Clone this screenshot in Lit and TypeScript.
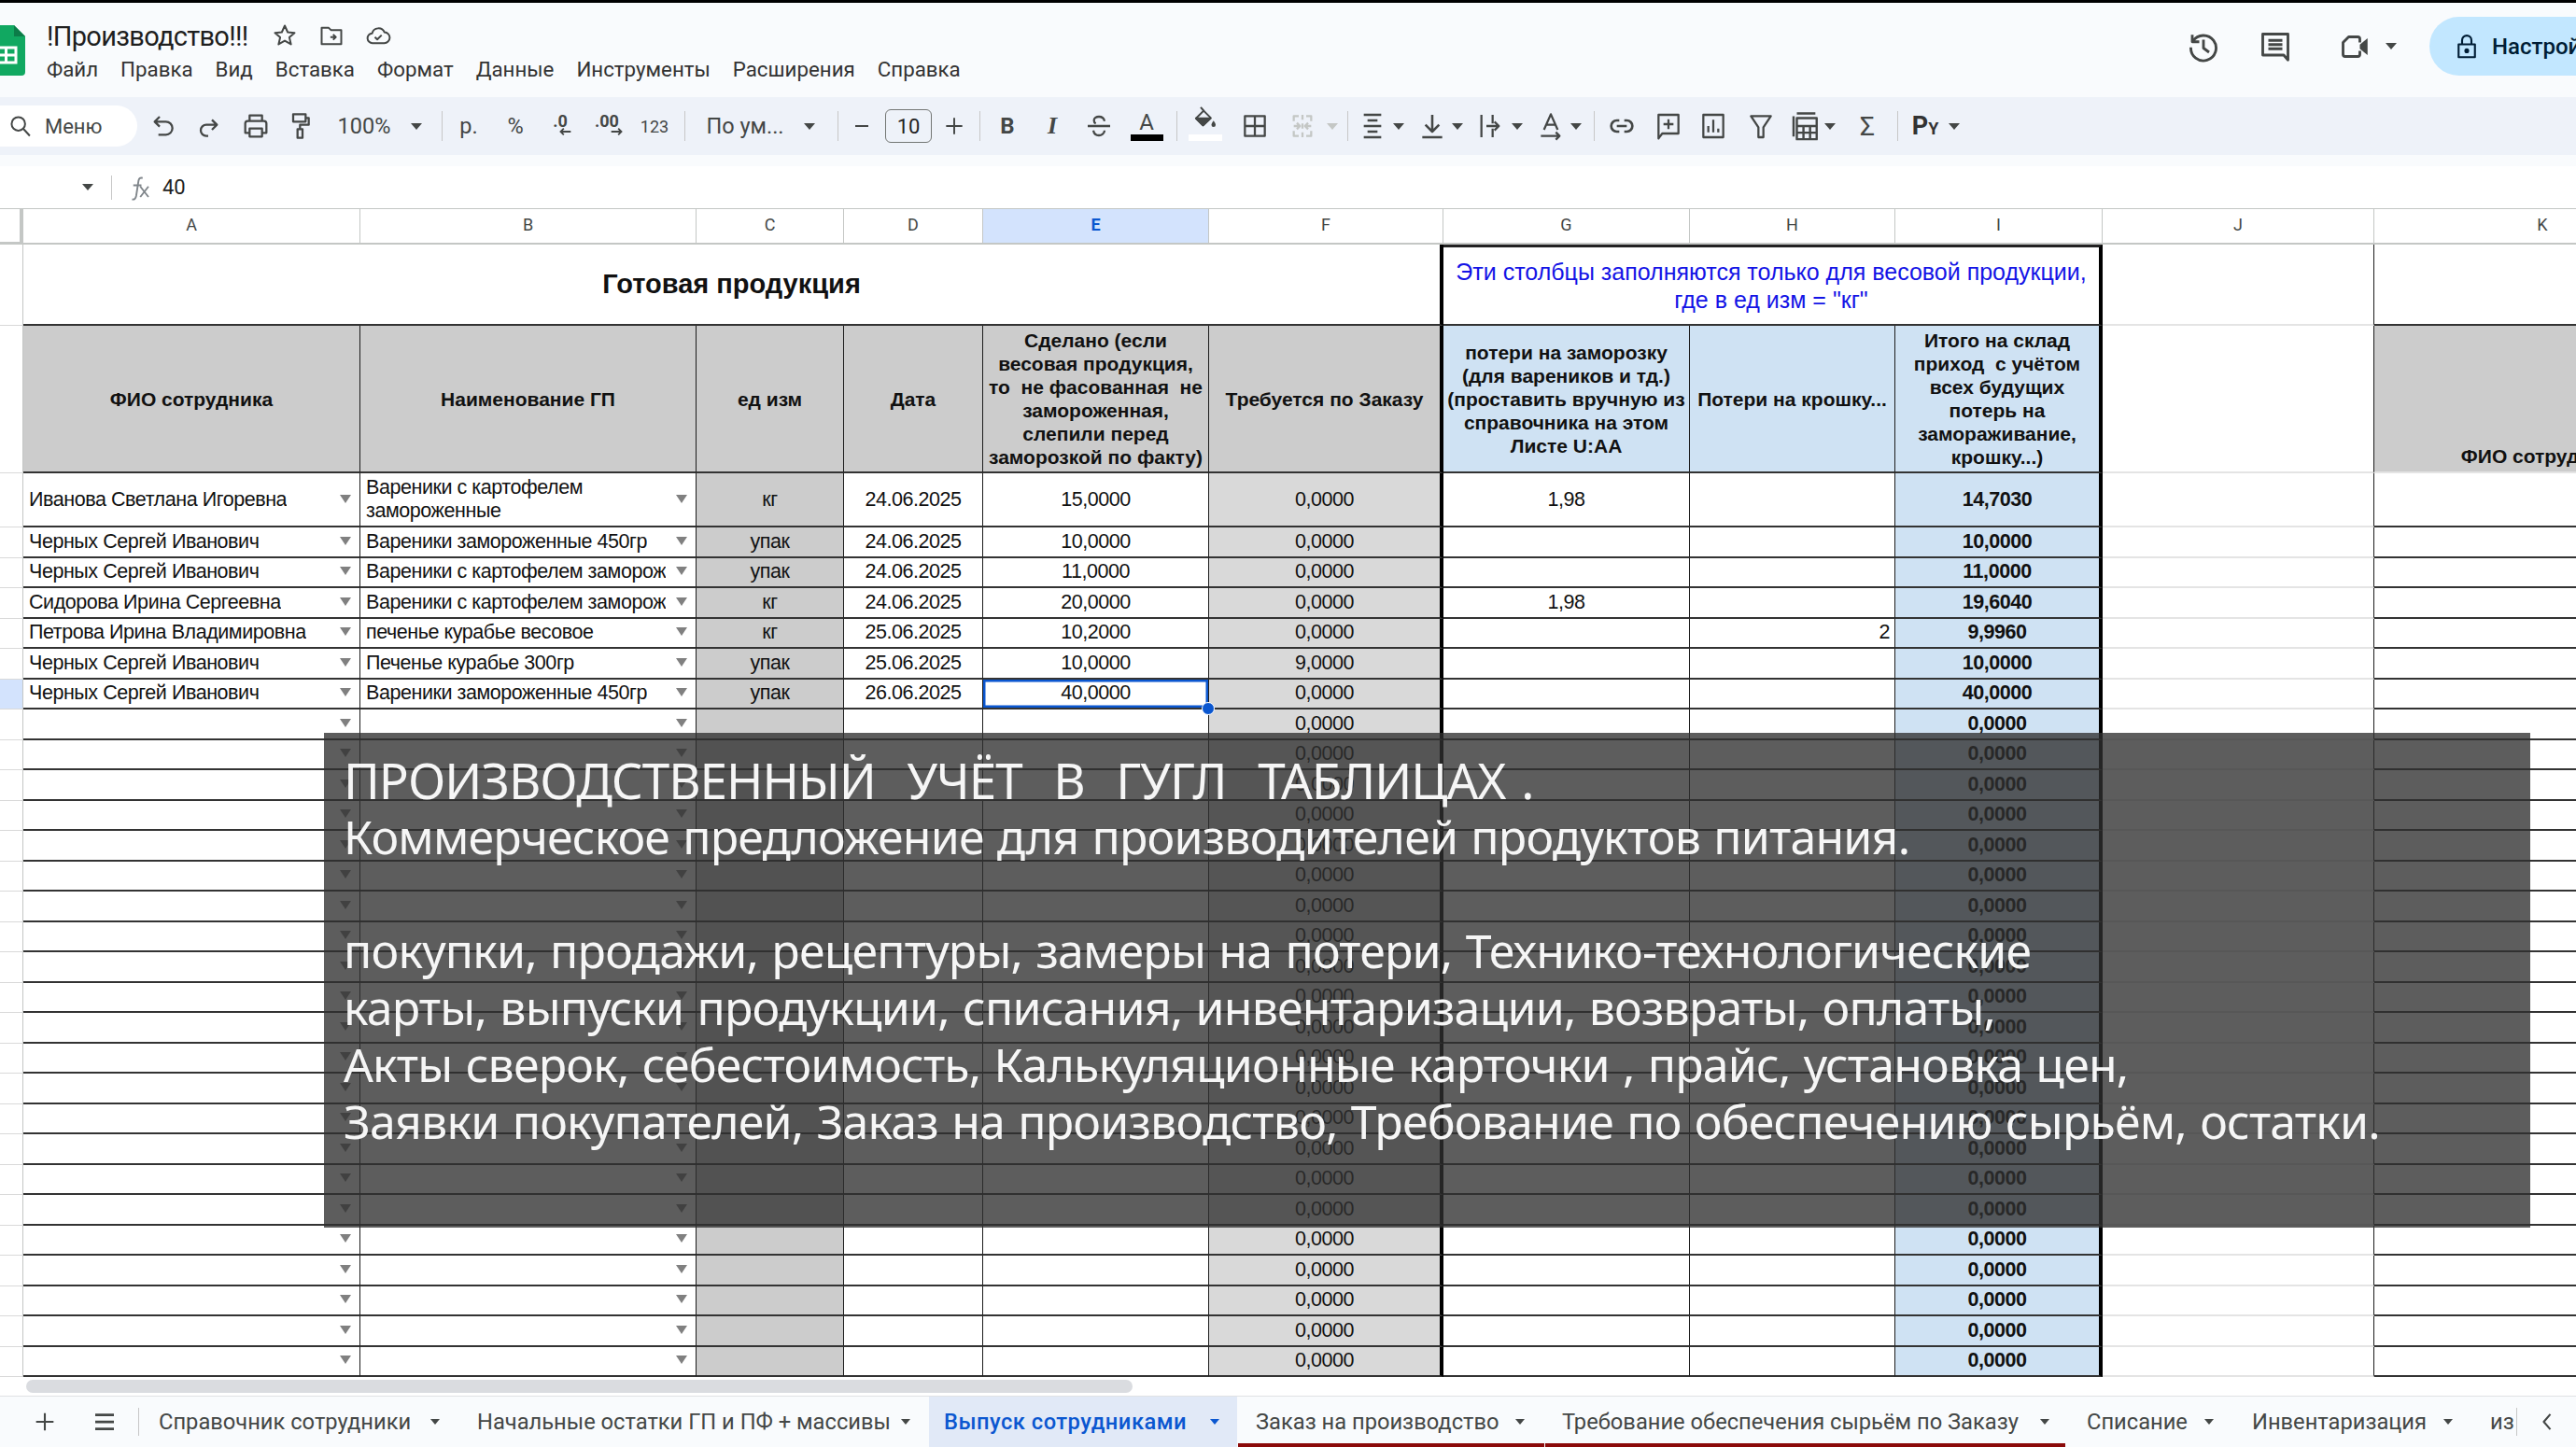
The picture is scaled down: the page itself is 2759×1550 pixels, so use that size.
import { LitElement, html, css, svg } from "lit";
import { customElement } from "lit/decorators.js";

const ic = (body: any, size = 32, cls = "") =>
  html`<svg class="ic ${cls}" width=${size} height=${size} viewBox="0 0 24 24" fill="none" stroke="currentColor" stroke-width="1.7" stroke-linejoin="round">${body}</svg>`;

const I = {
  search: svg`<circle cx="10" cy="10" r="6.2"/><path d="M14.6 14.6 20.5 21"/>`,
  undo: svg`<path d="M9 4.5 5 8.5l4 4M5 8.5h9a5.2 5.2 0 0 1 0 10.5H8"/>`,
  redo: svg`<path d="M15 7l4 4-4 4M19 11h-8.5a4.5 4.5 0 0 0 0 9H12"/>`,
  print: svg`<path d="M7 8V3.5h10V8M7 17.5H3.5V10a2 2 0 0 1 2-2h13a2 2 0 0 1 2 2v7.5H17M7 14h10v6.5H7z"/>`,
  paint: svg`<path d="M6 2.500h10v6H6zM16 5.500h2.500V11h-7v3.500M9.500 14.500h4v7h-4z"/>`,
  strike: svg`<path d="M3 12h18M16.500 8C16 5.500 14 4.500 12 4.500S8 5.500 8 7.500c0 1 .5 2 1.500 2.500M7.500 15.500c.5 2.500 2.500 4 4.500 4s4.500-1.500 4.500-4"/>`,
  fill: svg`<path d="M8 1.500 11 5M10.500 4.500 16.500 10.500 10 17 4 11z" stroke-width="1.600"/><path d="M4 11h12.500L10 17z" fill="currentColor"/><path d="M19 13c1.300 1.800 1.800 2.700 1.800 3.600a1.800 1.800 0 0 1-3.600 0c0-.9.500-1.800 1.800-3.600z" fill="currentColor" stroke="none"/>`,
  borders: svg`<path d="M4 4h16v16H4zM12 4v16M4 12h16"/>`,
  merge: svg`<path d="M9 4H5v4M9 20H5v-4M15 4h4v4M15 20h4v-4M12 3v4M12 10v4M12 17v4M5 12h4M7.500 9.500 10 12l-2.500 2.500M19 12h-4M16.500 9.500 14 12l2.500 2.500"/>`,
  align: svg`<path d="M5 3h14M8 7.500h8M5 12h14M8 16.500h8M5 21h14" stroke-width="2"/>`,
  valign: svg`<path d="M12 3v13M6.500 11l5.500 5.500 5.500-5.500M4 21h16" stroke-width="1.900"/>`,
  wrap: svg`<path d="M5 3v18M14 3v7M14 14v7M9 12h10M15.500 8.500 19 12l-3.500 3.500" />`,
  rotate: svg`<path d="M6.500 15 12 2.500 17.500 15M8.500 11h7M4 20h15M16 17l3 3-3 3"/>`,
  link: svg`<path d="M10 7.500H8a4.500 4.500 0 0 0 0 9h2M14 7.500h2a4.500 4.500 0 0 1 0 9h-2M8 12h8" stroke-width="2"/>`,
  comment: svg`<path d="M4 3h16v15H7l-3 4zM12 6.500v8M8 10.500h8"/>`,
  chart: svg`<path d="M4 3h16v18H4zM8 17v-5M12 17V7M16 17v-3"/>`,
  filter: svg`<path d="M4 4h16l-6 9v8h-4v-8z"/>`,
  calc: svg`<path d="M3.500 20V4.500M6 2.500h14M6 6h15v16H6zM6 12h15M6 17h15M11 12v10M16 12v10"/>`,
  hist: svg`<path d="M4.500 8A9 9 0 1 1 3 12.500M4 3.500V8.500h5M12 7v6l4 3" stroke-width="1.900"/>`,
  chat: svg`<path d="M3 3h18v18.500L18 18H3zM7 7.500h10M7 10.500h10M7 13.500h10" stroke-width="1.900"/>`,
  cam: svg`<path d="M15 9V6.500a1.500 1.500 0 0 0-1.500-1.500H7L3 9v8.500A1.500 1.500 0 0 0 4.500 19h9a1.500 1.500 0 0 0 1.500-1.500V15" stroke-width="1.900"/><path d="M15 10.500 20.500 6v12L15 13.500z" fill="currentColor" stroke="none"/>`,
  lock: svg`<path d="M5 10h14v11H5zM8 10V6.500a4 4 0 0 1 8 0V10"/><circle cx="12" cy="15.500" r="1.200" fill="currentColor"/>`,
  star: svg`<path d="m12 3 2.700 6 6.300.6-4.800 4.200 1.500 6.300L12 16.800 6.300 20.100l1.500-6.300L3 9.600 9.300 9z"/>`,
  folder: svg`<path d="M3 5h6.500l2 2H21v13H3zM11 13.500h5M13.500 11l2.500 2.500-2.500 2.500"/>`,
  cloud: svg`<path d="M7 19a4.500 4.500 0 0 1-.5-9 6 6 0 0 1 11.300-1A5 5 0 0 1 17.500 19zM9 13.500l2.200 2.200 4-4"/>`,
  plus: svg`<path d="M12 4v16M4 12h16" stroke-width="1.800"/>`,
  menu: svg`<path d="M4 6h16M4 12h16M4 18h16" stroke-width="2.200"/>`,
  chev: svg`<path d="M15 5l-6 7 6 7" stroke-width="1.800"/>`,
  fx: svg`<path d="M6 22c2 .5 3-.5 3.500-3l2-13c.4-2 1.500-2.800 3.500-2.200M7 10h7M13 11l7 9M20 11l-7 9" stroke-width="1.500"/>`,
};

const arr = html`<span class="tri"></span>`;

type Tb = { c: number; n?: any; t?: string; k?: string };
const tb: Tb[] = [
  { c: 175, n: ic(I.undo) },
  { c: 223, n: ic(I.redo) },
  { c: 274, n: ic(I.print) },
  { c: 322, n: ic(I.paint) },
  { c: 390, t: "100%", k: "t" },
  { c: 446, k: "a" },
  { c: 473, k: "s" },
  { c: 502, t: "р.", k: "t" },
  { c: 552, t: "%", k: "t" },
  { c: 600, k: "d0" },
  { c: 650, k: "d00" },
  { c: 701, t: "123", k: "t n123" },
  { c: 733, k: "s" },
  { c: 798, t: "По ум...", k: "t" },
  { c: 867, k: "a" },
  { c: 897, k: "s" },
  { c: 923, k: "minus" },
  { c: 973, k: "box" },
  { c: 1022, n: ic(I.plus, 26) },
  { c: 1049, k: "s" },
  { c: 1079, t: "B", k: "t b" },
  { c: 1127, t: "I", k: "t it" },
  { c: 1177, n: ic(I.strike) },
  { c: 1228, k: "color" },
  { c: 1260, k: "s" },
  { c: 1291, k: "fillc" },
  { c: 1344, n: ic(I.borders) },
  { c: 1395, n: ic(I.merge, 32, "dim") },
  { c: 1427, k: "a dima" },
  { c: 1443, k: "s" },
  { c: 1470, n: ic(I.align) },
  { c: 1498, k: "a" },
  { c: 1534, n: ic(I.valign) },
  { c: 1561, k: "a" },
  { c: 1596, n: ic(I.wrap) },
  { c: 1625, k: "a" },
  { c: 1661, n: ic(I.rotate) },
  { c: 1688, k: "a" },
  { c: 1707, k: "s" },
  { c: 1737, n: ic(I.link) },
  { c: 1787, n: ic(I.comment) },
  { c: 1835, n: ic(I.chart) },
  { c: 1886, n: ic(I.filter) },
  { c: 1933, n: ic(I.calc, 34) },
  { c: 1960, k: "a" },
  { c: 2000, t: "Σ", k: "t sig" },
  { c: 2032, k: "s" },
  { c: 2062, k: "py" },
  { c: 2093, k: "a" },
];

const START = 147;
let prevRight = START;
const tbBox = tb.map((it, i) => {
  const dl = i === 0 ? (it.c - START) * 2 : it.c - tb[i - 1].c;
  const dr = i === tb.length - 1 ? 40 : tb[i + 1].c - it.c;
  const h = Math.min(dl, dr) / 2;
  const m = it.c - h - prevRight;
  prevRight = it.c + h;
  return { w: h * 2, m };
});

const tbItem = (it: Tb, b: { w: number; m: number }) => {
  const k = it.k || "";
  let inner: any = it.n;
  if (it.t) inner = html`<span class=${k}>${it.t}</span>`;
  else if (k.startsWith("a")) inner = html`<span class="tri ${k.includes("dima") ? "dimtri" : ""}"></span>`;
  else if (k === "s") inner = html`<span class="sep"></span>`;
  else if (k === "minus") inner = html`<span class="minus"></span>`;
  else if (k === "box") inner = html`<span class="sizebox">10</span>`;
  else if (k === "d0" || k === "d00")
    inner = html`<span class="dec"><span>${k === "d0" ? ".0" : ".00"}</span>
      <svg width="15" height="10" viewBox="0 0 18 12" fill="none" stroke="currentColor" stroke-width="2.200">
        ${k === "d0" ? svg`<path d="M16 6H3M7 2 3 6l4 4"/>` : svg`<path d="M2 6h13M11 2l4 4-4 4"/>`}
      </svg></span>`;
  else if (k === "color") inner = html`<span class="colorA"><span>A</span><i></i></span>`;
  else if (k === "fillc") inner = html`<span class="colorF">${ic(I.fill, 30)}<i></i></span>`;
  else if (k === "py") inner = html`<span class="py">P<small>Y</small></span>`;
  return html`<div class="tbi" style="width:${b.w}px;margin-left:${b.m}px">${inner}</div>`;
};

type R = string[];
const rows: R[] = [
  ["Иванова Светлана Игоревна", "Вареники с картофелем замороженные", "кг", "24.06.2025", "15,0000", "0,0000", "1,98", "", "14,7030"],
  ["Черных Сергей Иванович", "Вареники замороженные 450гр", "упак", "24.06.2025", "10,0000", "0,0000", "", "", "10,0000"],
  ["Черных Сергей Иванович", "Вареники с картофелем заморож", "упак", "24.06.2025", "11,0000", "0,0000", "", "", "11,0000"],
  ["Сидорова Ирина Сергеевна", "Вареники с картофелем заморож", "кг", "24.06.2025", "20,0000", "0,0000", "1,98", "", "19,6040"],
  ["Петрова Ирина Владимировна", "печенье курабье весовое", "кг", "25.06.2025", "10,2000", "0,0000", "", "2", "9,9960"],
  ["Черных Сергей Иванович", "Печенье курабье 300гр", "упак", "25.06.2025", "10,0000", "9,0000", "", "", "10,0000"],
  ["Черных Сергей Иванович", "Вареники замороженные 450гр", "упак", "26.06.2025", "40,0000", "0,0000", "", "", "40,0000"],
];
for (let i = 0; i < 22; i++) rows.push(["", "", "", "", "", "0,0000", "", "", "0,0000"]);

const menus = ["Файл", "Правка", "Вид", "Вставка", "Формат", "Данные", "Инструменты", "Расширения", "Справка"];
const cols = ["A", "B", "C", "D", "E", "F", "G", "H", "I", "J", "K"];
type Tab = { n: string; l: number; r: number; x: number; a?: number; on?: boolean; ul?: boolean };
const tabs: Tab[] = [
  { n: "Справочник сотрудники", l: 149, r: 495, x: 170, a: 466 },
  { n: "Начальные остатки ГП и ПФ + массивы", l: 495, r: 995, x: 511, a: 970 },
  { n: "Выпуск сотрудниками", l: 995, r: 1325, x: 1011, a: 1301, on: true },
  { n: "Заказ на производство", l: 1325, r: 1654, x: 1345, a: 1628, ul: true },
  { n: "Требование обеспечения сырьём по Заказу", l: 1654, r: 2212, x: 1673, a: 2190, ul: true },
  { n: "Списание", l: 2212, r: 2392, x: 2235, a: 2366 },
  { n: "Инвентаризация", l: 2392, r: 2650, x: 2412, a: 2622 },
  { n: "из", l: 2650, r: 2695, x: 2667 },
];

@customElement("app-root")
export class AppRoot extends LitElement {
  static styles = css`
    :host { display: block; width: 2759px; height: 1550px; overflow: hidden; position: relative; background: #fff; font-family: Roboto, "Liberation Sans", sans-serif; color: #444746; }
    .ic { display: block; flex: none; }
    .dim { color: #c4c7c5; }
    .tri { display: block; flex: none; width: 0; height: 0; border-left: 6px solid transparent; border-right: 6px solid transparent; border-top: 7px solid #444746; }
    .dimtri { border-top-color: #c4c7c5; }

    header { box-sizing: border-box; height: 104px; border-top: 3px solid #000; background: #f9fbfd; display: flex; align-items: flex-start; }
    .logo { margin: 24px 0 0 -13px; flex: none; width: 40px; height: 54px; }
    .titles { margin-left: 23px; padding-top: 16px; display: flex; flex-direction: column; }
    .tline { display: flex; align-items: center; height: 38px; }
    .title { font-size: 29px; color: #1f1f1f; letter-spacing: -0.7px; width: 241px; white-space: nowrap; padding-top: 1px; }
    .ticons { display: flex; gap: 22px; color: #444746; }
    .menu { display: flex; gap: 24px; font-size: 22.300px; color: #333; height: 40px; align-items: center; margin-top: -3px; }
    .hright { margin-left: auto; margin-right: -223px; display: flex; align-items: center; padding-top: 15px; }
    .hr1 { margin-right: 41px; }
    .hr2 { margin-right: 50px; }
    .hr3 { margin-right: 14px; }
    .hr4 { margin-right: 35px; }
    .share { display: flex; align-items: center; gap: 12px; height: 63px; width: 380px; box-sizing: border-box; padding-left: 25px; border-radius: 32px; background: #c2e7ff; color: #001d35; font-size: 24px; white-space: nowrap; font-weight: 500; }

    .toolbar { height: 62px; background: #eef2f9; display: flex; align-items: center; }
    .pill { flex: none; width: 147px; height: 44px; border-radius: 0 22px 22px 0; background: #fff; display: flex; align-items: center; gap: 12px; padding-left: 8px; box-sizing: border-box; font-size: 22px; color: #444746; }
    .tbi { flex: none; display: flex; align-items: center; justify-content: center; height: 100%; }
    .t { font-size: 23.500px; white-space: nowrap; color: #444746; }
    .tbi .n123 { font-size: 18px; }
    .tbi .b { font-weight: 700; font-size: 24px; }
    .tbi .it { font-style: italic; font-weight: 700; font-size: 26px; font-family: "Liberation Serif", serif; }
    .tbi .sig { font-size: 28px; }
    .sep { display: block; width: 1px; height: 32px; background: #c7c7c7; }
    .minus { display: block; width: 14px; height: 2.500px; background: #444746; }
    .sizebox { box-sizing: border-box; flex: none; width: 50px; height: 36px; border: 1.500px solid #747775; border-radius: 6px; display: flex; align-items: center; justify-content: center; font-size: 22px; color: #1f1f1f; }
    .dec { display: flex; flex-direction: column; align-items: flex-start; font-size: 18px; font-weight: 700; line-height: 15px; margin-top: -2px; }
    .dec svg { align-self: flex-end; margin-right: -5px; margin-top: -1px; }
    .colorA { display: flex; flex-direction: column; align-items: center; font-size: 24px; line-height: 24px; }
    .colorA i { display: block; width: 35px; height: 7px; background: #000; margin-top: 1px; }
    .colorF { display: flex; flex-direction: column; align-items: center; margin-top: -6px; }
    .colorF i { display: block; width: 36px; height: 7px; background: #fff; margin-top: 1px; }
    .py { font-weight: 700; font-size: 27px; color: #333; }
    .py small { font-size: 18px; }
    .gap { height: 12px; background: #f9fbfd; }

    .fbar { height: 45px; background: #fff; display: flex; align-items: center; }
    .fname { width: 119px; display: flex; justify-content: flex-end; padding-right: 19px; box-sizing: border-box; }
    .fsep { width: 1px; height: 26px; background: #c7c7c7; }
    .fx { margin: 0 10px 0 14px; color: #80868b; }
    .fval { font-size: 22px; color: #1f1f1f; }

    .grid { display: grid; grid-template-columns: 25px 361px 360px 158px 149px 242px 251px 264px 220px 222px 291px 361px; grid-template-rows: 39px 87px 158px 58px repeat(28, 32.500px); width: 2759px; height: 1252px; overflow: hidden; font-family: "Liberation Sans", Arial, sans-serif; font-size: 21.500px; letter-spacing: -0.440px; color: #111; }
    .ch { box-sizing: border-box; border-top: 1px solid #c4c7c5; border-right: 1px solid #c4c7c5; border-bottom: 2px solid #c4c7c5; padding-bottom: 3px; display: flex; align-items: center; justify-content: center; font-family: Roboto, sans-serif; font-size: 18px; letter-spacing: 0; color: #444746; background: #fff; }
    .corner { border-right: 4px solid #c4c7c5; border-bottom: 3px solid #c4c7c5; }
    .ch.sel { background: #d3e3fd; color: #0b57d0; font-weight: 700; }
    .rh { box-sizing: border-box; border-right: 1px solid #c4c7c5; border-bottom: 1px solid #d9d9d9; background: #fff; }
    .rh.sel { background: #d3e3fd; }
    .c { box-sizing: border-box; border-right: 1px solid #1c1c1c; border-bottom: 2px solid #333; display: flex; align-items: center; justify-content: center; text-align: center; overflow: hidden; min-width: 0; }
    .nw { white-space: nowrap; }
    .l { justify-content: space-between; text-align: left; padding: 0 9px 0 6px; gap: 2px; }
    .l .dd { flex: none; width: 0; height: 0; border-left: 6px solid transparent; border-right: 6px solid transparent; border-top: 9px solid #808080; margin-left: auto; margin-bottom: 2px; }
    .lt { line-height: 25px; white-space: nowrap; overflow: hidden; }
    .lt.wr { white-space: normal; width: 300px; }
    .g1 { background: #ccc; }
    .g2 { background: #d9d9d9; }
    .bl { background: #cfe2f3; }
    .th { font-weight: 700; font-size: 21px; letter-spacing: 0; line-height: 25px; padding: 0 2px; }
    .thickr { border-right: 4px solid #000; }
    .title1 { grid-column: 2 / span 6; font-size: 29px; letter-spacing: 0; font-weight: 700; padding-bottom: 1px; }
    .blue { grid-column: 8 / span 3; color: #1414e6; font-size: 25px; letter-spacing: 0; line-height: 30px; border-top: 3px solid #222; padding: 0 8px; }
    .j { border-bottom: 2px solid #e4e4e4; }
    .k1 { border-bottom: 2px solid #333; }
    .kh { align-items: flex-end; padding-bottom: 4px; white-space: nowrap; border-bottom: 2px solid #e4e4e4; }
    .r { justify-content: flex-end; padding-right: 5px; }
    .bold { font-weight: 700; }
    .sel-cell { position: relative; overflow: visible; box-shadow: inset 0 0 0 2.500px #0b57d0; z-index: 2; }
    .handle { position: absolute; right: -7px; bottom: -8px; width: 12px; height: 12px; border-radius: 50%; background: #0b57d0; border: 1px solid #fff; }

    .scroll { height: 20px; background: #fff; display: flex; align-items: center; padding-left: 28px; box-sizing: border-box; }
    .thumb { width: 1185px; height: 14px; border-radius: 7px; background: #dadce0; }

    .tabs { box-sizing: border-box; height: 55px; background: #f9fbfd; border-top: 1px solid #e0e2e4; display: flex; align-items: stretch; font-size: 23.700px; color: #444746; }
    .tbtn { flex: none; display: flex; align-items: center; justify-content: center; }
    .plusb { width: 96px; }
    .menub { width: 32px; margin-right: 20px; }
    .chevb { width: 64px; }
    .tabsep { flex: none; width: 1px; height: 30px; background: #c7c7c7; align-self: center; }
    .tab { flex: none; display: flex; align-items: center; white-space: nowrap; box-sizing: border-box; position: relative; }
    .tab .tri { border-left-width: 5px; border-right-width: 5px; border-top-width: 6px; margin-left: auto; }
    .tab.on { background: #e1e9f7; color: #0b57d0; font-weight: 500; letter-spacing: 0.500px; }
    .tab.on .tri { border-top-color: #0b57d0; }
    .ul { position: absolute; left: 1px; right: 0; bottom: 0; height: 4px; background: #8b0a0a; }

    .overlay { position: absolute; left: 347px; top: 785px; width: 2363px; height: 530px; box-sizing: border-box; padding: 20px 0 0 21px; background: rgba(48, 48, 48, 0.78); color: #f6f6f6; font-family: "Noto Sans", "Open Sans", sans-serif; font-size: 50px; letter-spacing: -0.800px; word-spacing: 2px; line-height: 61px; z-index: 5; white-space: pre; }
    .overlay .big { font-size: 53px; letter-spacing: -1px; word-spacing: 4px; }
  `;

  render() {
    const logo = html`<svg class="logo" viewBox="0 0 40 54">
      <path d="M3 0h25l12 12v38a4 4 0 0 1-4 4H4a4 4 0 0 1-4-4V3a3 3 0 0 1 3-3z" fill="#11a861"/>
      <path d="M28 0l12 12H28z" fill="#0c7c48"/>
      <path d="M9 24h21v16H9zM19.500 24v16M9 32h21" fill="none" stroke="#fff" stroke-width="3"/>
    </svg>`;

    const cells: any[] = [];
    cols.forEach((c, i) => {
      if (i === 0) cells.push(html`<div class="ch corner"></div>`);
      cells.push(html`<div class="ch ${c === "E" ? "sel" : ""}">${c}</div>`);
    });
    cells.push(html`<div class="rh"></div>`);
    cells.push(html`<div class="c title1 thickr">Готовая продукция</div>`);
    cells.push(html`<div class="c blue thickr">Эти столбцы заполняются только для весовой продукции,<br />где в ед изм = "кг"</div>`);
    cells.push(html`<div class="c j"></div>`);
    cells.push(html`<div class="c k1"></div>`);
    const heads: [string, string][] = [
      ["ФИО сотрудника", "g1"],
      ["Наименование ГП", "g1"],
      ["ед изм", "g1"],
      ["Дата", "g1"],
      ["Сделано (если весовая продукция, то\u00a0 не фасованная\u00a0 не замороженная, слепили перед заморозкой по факту)", "g1"],
      ["Требуется по Заказу", "g1 thickr"],
      ["потери на заморозку (для вареников и тд.) (проставить вручную из справочника на этом Листе U:AA", "bl"],
      ["Потери на крошку...", "bl"],
      ["Итого на склад приход\u00a0 с учётом всех будущих потерь на замораживание, крошку...)", "bl thickr"],
    ];
    cells.push(html`<div class="rh"></div>`);
    heads.forEach(([t, k]) => cells.push(html`<div class="c th ${k}">${t}</div>`));
    cells.push(html`<div class="c j"></div>`);
    cells.push(html`<div class="c th g1 kh">ФИО сотрудника</div>`);

    rows.forEach((r, ri) => {
      cells.push(html`<div class="rh ${ri === 6 ? "sel" : ""}"></div>`);
      cells.push(html`<div class="c l"><span class="lt">${r[0]}</span><span class="dd"></span></div>`);
      cells.push(html`<div class="c l"><span class="lt ${ri === 0 ? "wr" : ""}">${r[1]}</span><span class="dd"></span></div>`);
      cells.push(html`<div class="c g1 nw">${r[2]}</div>`);
      cells.push(html`<div class="c nw">${r[3]}</div>`);
      cells.push(ri === 6
        ? html`<div class="c nw sel-cell">${r[4]}<span class="handle"></span></div>`
        : html`<div class="c nw">${r[4]}</div>`);
      cells.push(html`<div class="c nw g2 thickr">${r[5]}</div>`);
      cells.push(html`<div class="c nw">${r[6]}</div>`);
      cells.push(html`<div class="c nw r">${r[7]}</div>`);
      cells.push(html`<div class="c nw bl bold thickr">${r[8]}</div>`);
      cells.push(html`<div class="c j"></div>`);
      cells.push(html`<div class="c"></div>`);
    });

    return html`
      <header>
        ${logo}
        <div class="titles">
          <div class="tline">
            <span class="title">!Производство!!!</span>
            <span class="ticons">${ic(I.star, 28)}${ic(I.folder, 28)}${ic(I.cloud, 28)}</span>
          </div>
          <div class="menu">${menus.map((m) => html`<span>${m}</span>`)}</div>
        </div>
        <div class="hright">
          <span class="hr1">${ic(I.hist, 36)}</span>
          <span class="hr2">${ic(I.chat, 36)}</span>
          <span class="hr3">${ic(I.cam, 36)}</span>
          <span class="hr4">${arr}</span>
          <div class="share">${ic(I.lock, 30)}<span>Настройки Доступа</span></div>
        </div>
      </header>
      <div class="toolbar">
        <div class="pill">${ic(I.search, 28)}<span>Меню</span></div>
        ${tb.map((it, i) => tbItem(it, tbBox[i]))}
      </div>
      <div class="gap"></div>
      <div class="fbar">
        <div class="fname">${arr}</div>
        <div class="fsep"></div>
        <span class="fx">${ic(I.fx, 30)}</span>
        <span class="fval">40</span>
      </div>
      <div class="grid">${cells}</div>
      <div class="scroll"><div class="thumb"></div></div>
      <div class="tabs">
        <div class="tbtn plusb">${ic(I.plus, 28)}</div>
        <div class="tbtn menub">${ic(I.menu, 30)}</div>
        <span class="tabsep"></span>
        ${tabs.map((t) => html`<div class="tab ${t.on ? "on" : ""}" style="width:${t.r - t.l}px;padding-left:${t.x - t.l}px;padding-right:${t.a ? t.r - t.a - 5 : 0}px"><span>${t.n}</span>${t.a ? arr : ""}${t.ul ? html`<span class="ul"></span>` : ""}</div>`)}
        <span class="tabsep"></span>
        <div class="tbtn chevb">${ic(I.chev, 28)}</div>
      </div>
      <div class="overlay"><div class="big">ПРОИЗВОДСТВЕННЫЙ  УЧЁТ  В  ГУГЛ  ТАБЛИЦАХ .</div><div>Коммерческое предложение для производителей продуктов питания.</div><div> </div><div>покупки, продажи, рецептуры, замеры на потери, Технико-технологические</div><div>карты, выпуски продукции, списания, инвентаризации, возвраты, оплаты,</div><div>Акты сверок, себестоимость, Калькуляционные карточки , прайс, установка цен,</div><div>Заявки покупателей, Заказ на производство, Требование по обеспечению сырьём, остатки.</div></div>
    `;
  }
}
